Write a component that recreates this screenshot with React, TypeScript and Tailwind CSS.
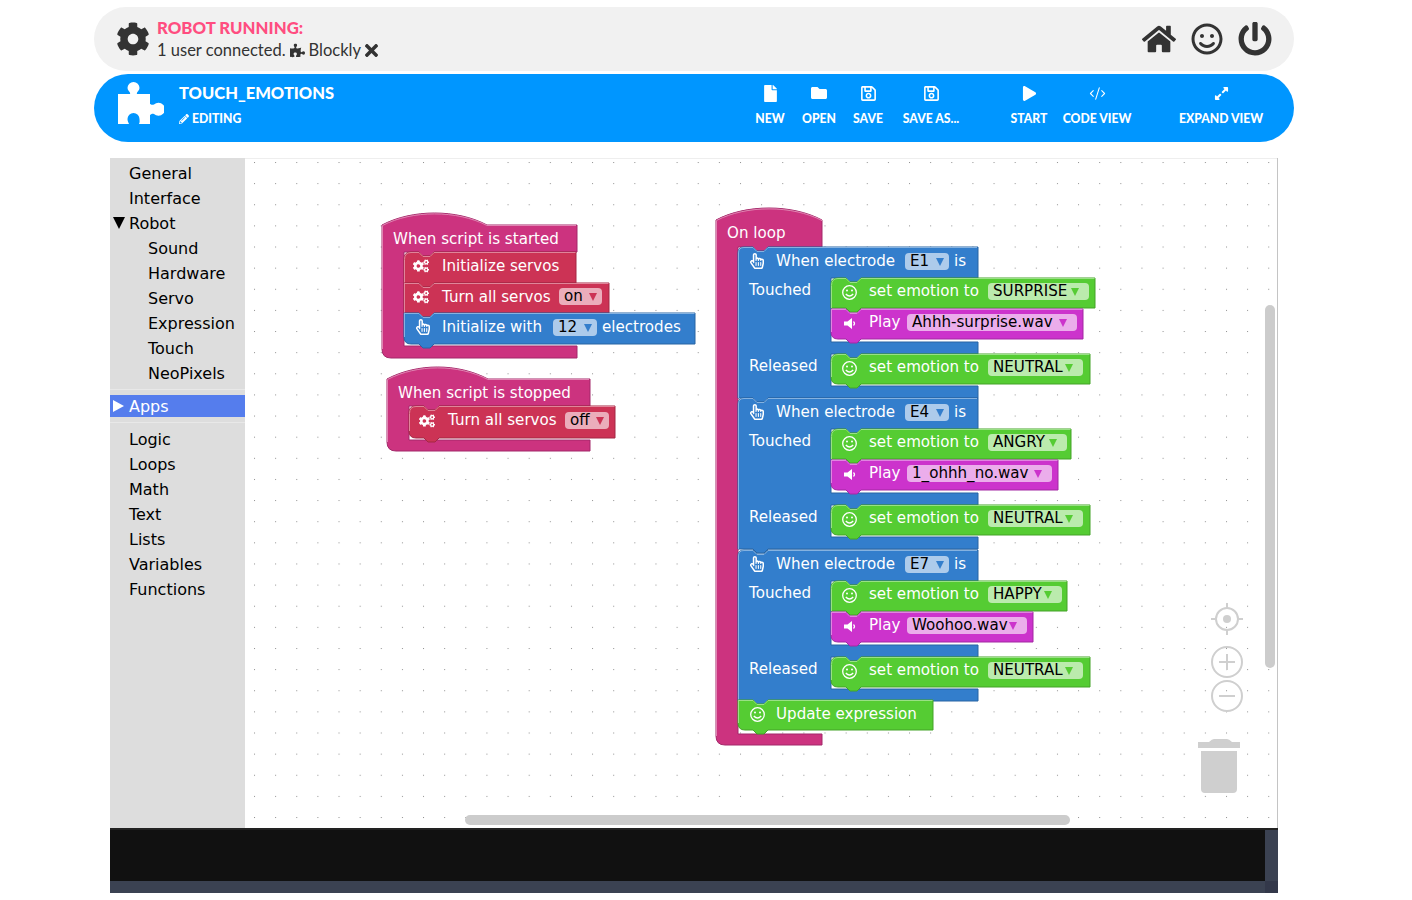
import type { ReactNode } from 'react';
import { FaCog, FaCogs, FaExpandAlt, FaFile, FaFolder, FaHome, FaPencilAlt, FaPlay, FaPuzzlePiece, FaRegHandPointer, FaRegSave, FaRegSmile, FaPowerOff, FaTimes } from 'react-icons/fa';
import { CodeXml } from 'lucide-react';

const TOOLBOX_TOP = ['General', 'Interface'];
const ROBOT_ITEMS = ['Sound', 'Hardware', 'Servo', 'Expression', 'Touch', 'NeoPixels'];
const TOOLBOX_BOTTOM = ['Logic', 'Loops', 'Math', 'Text', 'Lists', 'Variables', 'Functions'];

const HAT = '#cc337f';
const RED = '#cc3355';
const BLUE = '#337ecc';
const GREEN = '#55cc33';
const PURPLE = '#cc33cc';

const EDGES: Record<string, { dark: string; light: string; field: string }> = {
  [HAT]: { dark: '#a3296a', light: '#e085b2', field: '#ebadcc' },
  [RED]: { dark: '#a32944', light: '#e08599', field: '#ebadbb' },
  [BLUE]: { dark: '#2965a3', light: '#85b2e0', field: '#adcbeb' },
  [GREEN]: { dark: '#44a329', light: '#99e085', field: '#bbebad' },
  [PURPLE]: { dark: '#a329a3', light: '#e085e0', field: '#ebadeb' },
};

const FONT = "'DejaVu Sans', sans-serif";

// notch on top of a stack block, same shape for the tab under it
const notchDown = (x: number) => `H${x + 15} l4,4 h7 l4,-4`;
const notchUp = (x: number) => `H${x + 30} l-4,4 h-7 l-4,-4`;

function Stack({ x, y, w, h, color, round }: { x: number; y: number; w: number; h: number; color: string; round?: 'top' | 'bottom' | 'both' }) {
  const e = EDGES[color];
  const rt = round === 'top' || round === 'both' ? 7 : 0;
  const rb = round === 'bottom' || round === 'both' ? 7 : 0;
  const d = `M${x},${y + rt} Q${x},${y} ${x + rt},${y} ${notchDown(x)} H${x + w} V${y + h} ${notchUp(x)} H${x + rb} Q${x},${y + h} ${x},${y + h - rb} Z`;
  return (
    <g>
      <path d={d} fill={color} stroke={e.dark} strokeWidth={1} />
      <path d={`M${x + 0.5},${y + h - rb} V${y + rt + 0.5} Q${x + 0.5},${y + 0.5} ${x + rt},${y + 0.5} ${notchDown(x)} H${x + w - 0.5}`} fill="none" stroke={e.light} strokeWidth={1} />
    </g>
  );
}

function Label({ x, y, children }: { x: number; y: number; children: string }) {
  return (
    <text x={x} y={y} fill="#fff" fontSize={15.1} fontFamily={FONT}>
      {children}
    </text>
  );
}

function Dropdown({ x, y, w, color, value }: { x: number; y: number; w: number; color: string; value: string }) {
  const e = EDGES[color];
  const arrow = value.length > 3 ? 18 : 13;
  return (
    <g>
      <rect x={x} y={y} width={w} height={17} rx={4} fill={e.field} />
      <text x={x + 5} y={y + 13} fill="#000" fontSize={15.1} fontFamily={FONT}>
        {value}
      </text>
      <path d={`M${x + w - arrow},${y + 5} h8 l-4,8 Z`} fill={color} />
    </g>
  );
}

function GearsIcon({ x, y }: { x: number; y: number }) {
  return <FaCogs x={x - 1} y={y} width={21} height={18} color="#fff" />;
}

function HandIcon({ x, y }: { x: number; y: number }) {
  return <FaRegHandPointer x={x} y={y} width={17} height={19} color="#fff" />;
}

function SmileIcon({ x, y }: { x: number; y: number }) {
  return (
    <g transform={`translate(${x},${y})`} fill="none" stroke="#fff">
      <circle cx={7.5} cy={7.5} r={6.8} strokeWidth={1.3} />
      <circle cx={5} cy={5.5} r={1} fill="#fff" stroke="none" />
      <circle cx={10} cy={5.5} r={1} fill="#fff" stroke="none" />
      <path d="M3.8 9 Q7.5 13 11.2 9" strokeWidth={1.3} />
    </g>
  );
}

function SpeakerIcon({ x, y }: { x: number; y: number }) {
  return (
    <g transform={`translate(${x},${y})`} fill="#fff">
      <path d="M0 3.5h3.5L8 0v11L3.5 7.5H0z" />
      <path d="M9.5 3.5 Q11.5 5.5 9.5 7.5" fill="none" stroke="#fff" strokeWidth={1.2} />
    </g>
  );
}

function EmotionBlock({ y, w, value, fieldW, last }: { y: number; w: number; value: string; fieldW: number; last?: boolean }) {
  return (
    <g>
      <Stack x={831} y={y} w={w} h={30} color={GREEN} round={last ? 'both' : 'top'} />
      <SmileIcon x={842} y={y + 7} />
      <Label x={869} y={y + 18}>set emotion to</Label>
      <Dropdown x={988} y={y + 5} w={fieldW} color={GREEN} value={value} />
    </g>
  );
}

function PlayBlock({ y, w, value, fieldW }: { y: number; w: number; value: string; fieldW: number }) {
  return (
    <g>
      <Stack x={831} y={y} w={w} h={30} color={PURPLE} round="bottom" />
      <SpeakerIcon x={844} y={y + 9} />
      <Label x={869} y={y + 18}>Play</Label>
      <Dropdown x={907} y={y + 5} w={fieldW} color={PURPLE} value={value} />
    </g>
  );
}

function TouchBlock({ y, electrode, emotion, emotionW, fieldW, sound, playW, soundW }: {
  y: number; electrode: string; emotion: string; emotionW: number; fieldW: number; sound: string; playW: number; soundW: number;
}) {
  const x = 738;
  const r = 978;
  const d = `M${x},${y + 6} Q${x},${y} ${x + 6},${y} ${notchDown(x)} H${r} V${y + 31} ${notchUp(831)} H831 V${y + 95} H${r} V${y + 107} ${notchUp(831)} H831 V${y + 139} H${r} V${y + 151} ${notchUp(x)} H${x} Z`;
  return (
    <g>
      <path d={d} fill={BLUE} stroke={EDGES[BLUE].dark} strokeWidth={1} />
      <path d={`M${x + 0.5},${y + 151} V${y + 6} Q${x + 0.5},${y + 0.5} ${x + 6},${y + 0.5} ${notchDown(x)} H${r - 1}`} fill="none" stroke={EDGES[BLUE].light} strokeWidth={1} />
      <HandIcon x={749} y={y + 6} />
      <Label x={776} y={y + 19}>When electrode</Label>
      <Dropdown x={905} y={y + 6} w={44} color={BLUE} value={electrode} />
      <Label x={954} y={y + 19}>is</Label>
      <Label x={749} y={y + 48}>Touched</Label>
      <EmotionBlock y={y + 31} w={emotionW} value={emotion} fieldW={fieldW} />
      <PlayBlock y={y + 62} w={playW} value={sound} fieldW={soundW} />
      <Label x={749} y={y + 124}>Released</Label>
      <EmotionBlock y={y + 107} w={259} value="NEUTRAL" fieldW={95} last />
    </g>
  );
}

function HatBlock({ x, y, right, humpEnd, bottom, bar, footTop, title, titleY }: {
  x: number; y: number; right: number; humpEnd: number; bottom: number; bar: number; footTop: number; title: string; titleY: number;
}) {
  const inner = x + 22;
  const d = `M${x},${y + 12} C${x + 30},${y - 4} ${humpEnd - 30},${y - 4} ${humpEnd},${y + 12} H${right} V${bar} ${notchUp(inner)} H${inner} V${footTop} H${right} V${bottom} H${x + 9} Q${x},${bottom} ${x},${bottom - 9} Z`;
  return (
    <g>
      <path d={d} fill={HAT} stroke={EDGES[HAT].dark} strokeWidth={1} />
      <path d={`M${x + 0.5},${bottom - 9} V${y + 12.5} C${x + 30},${y - 3} ${humpEnd - 30},${y - 3} ${humpEnd},${y + 12.5} H${right - 1}`} fill="none" stroke={EDGES[HAT].light} strokeWidth={1} />
      <Label x={x + 11} y={titleY}>{title}</Label>
    </g>
  );
}

function Workspace() {
  return (
    <svg viewBox="245 158 1032 670" className="absolute inset-0 h-full w-full">
      <defs>
        <pattern id="grid" x={254} y={162} width={21.13} height={21.13} patternUnits="userSpaceOnUse">
          <rect width={1} height={1} fill="#8f8f8f" />
        </pattern>
      </defs>
      <rect x={245} y={158} width={1032} height={670} fill="url(#grid)" />
      <rect x={245} y={158} width={1032} height={1} fill="#eeeeee" />

      <HatBlock x={382} y={213} right={577} humpEnd={487} bottom={358} bar={252} footTop={346} title="When script is started" titleY={244} />
      <Stack x={404} y={252} w={172} h={31} color={RED} round="top" />
      <GearsIcon x={414} y={258} />
      <Label x={442} y={271}>Initialize servos</Label>
      <Stack x={404} y={283} w={205} h={30} color={RED} />
      <GearsIcon x={414} y={289} />
      <Label x={442} y={302}>Turn all servos</Label>
      <Dropdown x={559} y={288} w={43} color={RED} value="on" />
      <Stack x={404} y={313} w={291} h={31} color={BLUE} round="bottom" />
      <HandIcon x={415} y={319} />
      <Label x={442} y={332}>Initialize with</Label>
      <Dropdown x={553} y={319} w={44} color={BLUE} value="12" />
      <Label x={602} y={332}>electrodes</Label>

      <HatBlock x={387} y={367} right={590} humpEnd={488} bottom={451} bar={406} footTop={440} title="When script is stopped" titleY={398} />
      <Stack x={409} y={406} w={206} h={32} color={RED} round="both" />
      <GearsIcon x={420} y={413} />
      <Label x={448} y={425}>Turn all servos</Label>
      <Dropdown x={565} y={412} w={44} color={RED} value="off" />

      <HatBlock x={716} y={208} right={822} humpEnd={822} bottom={745} bar={247} footTop={734} title="On loop" titleY={238} />
      <TouchBlock y={247} electrode="E1" emotion="SURPRISE" emotionW={264} fieldW={101} sound="Ahhh-surprise.wav" playW={252} soundW={170} />
      <TouchBlock y={398} electrode="E4" emotion="ANGRY" emotionW={240} fieldW={79} sound="1_ohhh_no.wav" playW={227} soundW={145} />
      <TouchBlock y={550} electrode="E7" emotion="HAPPY" emotionW={236} fieldW={74} sound="Woohoo.wav" playW={202} soundW={120} />
      <Stack x={738} y={700} w={195} h={30} color={GREEN} round="bottom" />
      <SmileIcon x={750} y={707} />
      <Label x={776} y={719}>Update expression</Label>

      {/* zoom controls and trash */}
      <g fill="none" stroke="#cfcfcf" strokeWidth={2}>
        <circle cx={1227} cy={619} r={11} />
        <path d="M1227 603v6M1227 629v6M1211 619h6M1237 619h6" />
        <circle cx={1227} cy={662} r={15} />
        <path d="M1219 662h16M1227 654v16" />
        <circle cx={1227} cy={696} r={15} />
        <path d="M1219 696h16" />
      </g>
      <circle cx={1227} cy={619} r={4} fill="#cfcfcf" />
      <path d="M1198 748v-6h11q3-3 5-3h13q2 0 5 3h8v6zM1201 751h36v38q0 4-4 4h-28q-4 0-4-4z" fill="#cfcfcf" />
    </svg>
  );
}

function PuzzleLogo() {
  return (
    <svg viewBox="0 0 46 43" className="h-[43px] w-[46px] shrink-0" fill="#fff">
      <path d="M0 12H12C13 10 9.5 9 9.5 6A6 6 0 1 1 21.5 6C21.5 9 18 10 19 12H32V22C34 23 34.5 23 36 22.5A6.5 6.5 0 1 1 36 32C34.5 31.5 34 31.5 32 33V42H21C22 40 21.5 38.5 21.5 37A6 6 0 0 0 9.5 37C9.5 38.5 10 40 11 42H0Z" />
    </svg>
  );
}

function ToolbarButton({ icon, label, className }: { icon: ReactNode; label: string; className: string }) {
  return (
    <div className={`flex flex-col items-center ${className}`}>
      <div className="flex h-[20px] items-center justify-center">{icon}</div>
      <div className="mt-[9px] text-[12.2px] font-black leading-[14px] whitespace-nowrap">{label}</div>
    </div>
  );
}

export default function App() {
  return (
    <div className="h-[900px] w-[1412px] overflow-hidden bg-white pt-[7px] font-['Lato',sans-serif]">
      <div className="ml-[94px] flex h-[64px] w-[1200px] items-center rounded-[32px] bg-[#f1f1f1] pl-[22px] pr-[22px] text-[#333]">
        <FaCog className="h-[34px] w-[34px]" />
        <div className="ml-[7px]">
          <div className="text-[16.8px] font-black leading-[22px] text-[#ff4d80]">ROBOT RUNNING:</div>
          <div className="flex items-center text-[16.5px] leading-[22px]">
            1 user connected.
            <FaPuzzlePiece className="ml-[4px] mr-[4px] h-[15px] w-[15px]" />
            Blockly
            <FaTimes className="ml-[1px] h-[19px] w-[19px]" />
          </div>
        </div>
        <div className="ml-auto flex items-center gap-[15px]">
          <FaHome className="h-[34px] w-[34px]" />
          <FaRegSmile className="h-[32px] w-[32px]" />
          <FaPowerOff className="h-[34px] w-[34px]" />
        </div>
      </div>

      <div className="ml-[94px] mt-[3px] flex h-[68px] w-[1200px] items-start rounded-[34px] bg-[#0096ff] pl-[24px] pt-[8px] text-white">
        <PuzzleLogo />
        <div className="ml-[15px] w-[160px]">
          <div className="text-[16.5px] font-black leading-[22px]">TOUCH_EMOTIONS</div>
          <div className="mt-[8px] flex items-center gap-[3px] text-[12.2px] font-black leading-[14px]">
            <FaPencilAlt className="h-[10px] w-[10px]" /> EDITING
          </div>
        </div>
        <div className="ml-[413px] mt-[1px] flex">
          <ToolbarButton icon={<FaFile className="h-[17px] w-[17px]" />} label="NEW" className="w-[36px]" />
          <ToolbarButton icon={<FaFolder className="h-[16px] w-[16px]" />} label="OPEN" className="ml-[12px] w-[38px]" />
          <ToolbarButton icon={<FaRegSave className="h-[17px] w-[17px]" />} label="SAVE" className="ml-[14px] w-[32px]" />
          <ToolbarButton icon={<FaRegSave className="h-[17px] w-[17px]" />} label="SAVE AS..." className="ml-[16px] w-[62px]" />
          <ToolbarButton icon={<FaPlay className="h-[15px] w-[15px]" />} label="START" className="ml-[48px] w-[38px]" />
          <ToolbarButton icon={<CodeXml className="h-[17px] w-[17px]" strokeWidth={1.5} />} label="CODE VIEW" className="ml-[15px] w-[68px]" />
          <ToolbarButton icon={<FaExpandAlt className="h-[15px] w-[15px]" />} label="EXPAND VIEW" className="ml-[48px] w-[84px]" />
        </div>
      </div>

      <div className="ml-[110px] mt-[16px] flex h-[670px] w-[1168px] border-r border-[#c4c4c4]">
        <div className="w-[135px] shrink-0 bg-[#dddddd] pt-[3px] font-['DejaVu_Sans',sans-serif] text-[16px] leading-[25px] text-black">
          {TOOLBOX_TOP.map((name) => (
            <div key={name} className="pl-[19px]">{name}</div>
          ))}
          <div className="relative pl-[19px]">
            <span className="absolute left-[3px] top-[6px] h-0 w-0 border-x-[6px] border-t-[12px] border-x-transparent border-t-black" />
            Robot
          </div>
          {ROBOT_ITEMS.map((name) => (
            <div key={name} className="pl-[38px]">{name}</div>
          ))}
          <div className="mt-[3px] border-t border-[#e8e8e8]" />
          <div className="relative mt-[5px] h-[22px] bg-[#557ded] pl-[19px] leading-[24px] text-white">
            <span className="absolute left-[3px] top-[5px] h-0 w-0 border-y-[6px] border-l-[11px] border-y-transparent border-l-white" />
            Apps
          </div>
          <div className="mb-[4px] mt-[5px] border-t border-[#e8e8e8]" />
          {TOOLBOX_BOTTOM.map((name) => (
            <div key={name} className="pl-[19px]">{name}</div>
          ))}
        </div>
        <div className="relative flex-1">
          <Workspace />
          {/* workspace scrollbars */}
          <div className="absolute left-[220px] top-[657px] h-[10px] w-[605px] rounded-full bg-[#cccccc]" />
          <div className="absolute right-[2px] top-[147px] h-[363px] w-[10px] rounded-full bg-[#cccccc]" />
        </div>
      </div>

      <div className="ml-[110px] flex h-[65px] w-[1168px] border-t-2 border-[#222] bg-[#3b4252]">
        <div className="h-[51px] flex-1 bg-[#111111]" />
        <div className="flex w-[13px] flex-col justify-end">
          <div className="h-[12px] bg-[#33384a]" />
        </div>
      </div>
    </div>
  );
}
